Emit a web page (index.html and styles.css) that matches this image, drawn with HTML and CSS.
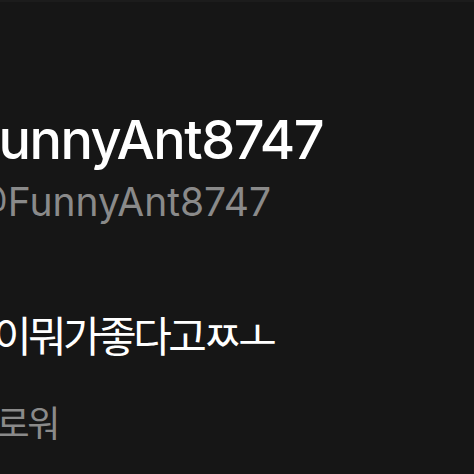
FILE: index.html
```html
<!DOCTYPE html>
<html lang="ko">
<head>
<meta charset="utf-8">
<link rel="stylesheet" href="styles.css">
</head>
<body>
<main class="profile">
  <h1 class="name">FunnyAnt8747</h1>
  <div class="handle">@FunnyAnt8747</div>
  <p class="bio">이뭐가좋다고ㅉㅗ</p>
  <div class="stats">팔로워</div>
</main>
</body>
</html>
```
FILE: styles.css
```css
html, body {
  margin: 0;
  padding: 0;
  background: #161616;
  height: 100%;
  overflow: hidden;
}
body {
  border-top: 2px solid #1c1c1c;
  box-sizing: border-box;
  font-family: Inter, "Noto Sans CJK KR", sans-serif;
}
.profile {
  display: flex;
  flex-direction: column;
  padding-top: 106px;
  white-space: nowrap;
}
.name {
  margin: 0 0 0 -30px;
  font-size: 54px;
  font-weight: 500;
  line-height: 64px;
  color: #ffffff;
  letter-spacing: -1.5px;
}
.handle {
  margin: 6px 0 0 -30px;
  font-size: 39px;
  line-height: 48px;
  color: #8a8a8a;
}
.bio {
  margin: 85px 0 0 -7px;
  font-size: 42px;
  line-height: 52px;
  letter-spacing: -3.6px;
  color: #ffffff;
}
.stats {
  margin: 38px 0 0 -34px;
  font-size: 36px;
  line-height: 46px;
  letter-spacing: -2.5px;
  color: #8a8a8a;
}
```
